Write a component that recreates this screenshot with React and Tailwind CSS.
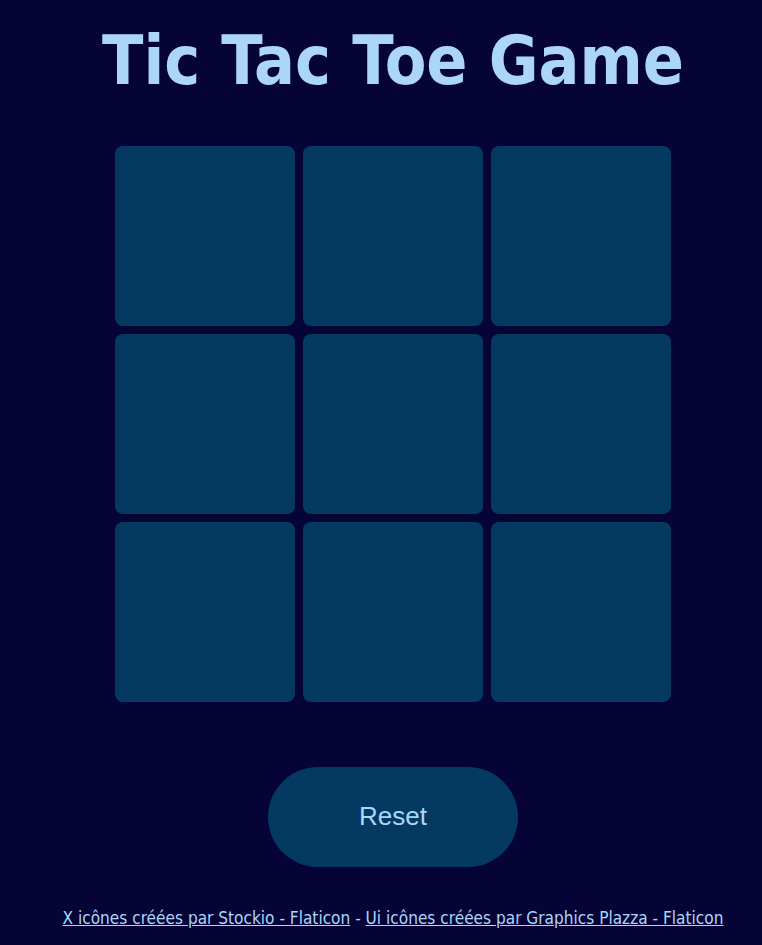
import { useState } from 'react';

export default function App() {
  const [board, setBoard] = useState(Array(9).fill(null));
  const [turn, setTurn] = useState('X');

  const play = (i) => {
    if (board[i]) return;
    const next = [...board];
    next[i] = turn;
    setBoard(next);
    setTurn(turn === 'X' ? 'O' : 'X');
  };

  const reset = () => { setBoard(Array(9).fill(null)); setTurn('X'); };

  return (
    <div className="min-h-[945px] bg-[#060337] pl-[24px] flex flex-col items-center text-[#abd6f9]">
      <h1 className="mt-[20px] text-[67.5px] leading-[82px] font-bold font-['DejaVu_Sans_Condensed',sans-serif]">
        Tic Tac Toe Game
      </h1>

      {/* Board */}
      <div className="mt-[44px] grid grid-cols-[repeat(3,180px)] grid-rows-[repeat(3,180px)] gap-[8px]">
        {board.map((v, i) => (
          <button key={i} onClick={() => play(i)}
            className="rounded-[8px] bg-[#043a62] flex items-center justify-center text-[96px] font-bold font-['DejaVu_Sans',sans-serif]">
            {v}
          </button>
        ))}
      </div>

      <button onClick={reset}
        className="mt-[65px] w-[250px] h-[100px] pb-[2px] rounded-full bg-[#043a62] text-[26px] font-['Liberation_Sans',Arial,sans-serif] text-[#abd6f9]">
        Reset
      </button>

      <p className="mt-[39px] text-[17.1px] font-['DejaVu_Sans_Condensed',sans-serif]">
        <a href="#" className="underline">X icônes créées par Stockio - Flaticon</a>
        {' - '}
        <a href="#" className="underline">Ui icônes créées par Graphics Plazza - Flaticon</a>
      </p>
    </div>
  );
}
